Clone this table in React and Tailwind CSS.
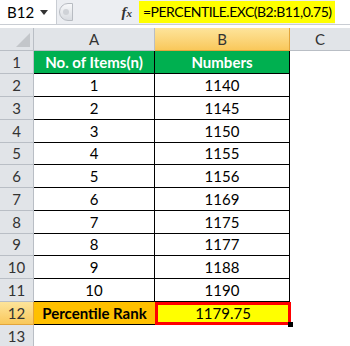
import React from "react";

const rows = [
  ["1", "1140"],
  ["2", "1145"],
  ["3", "1150"],
  ["4", "1155"],
  ["5", "1156"],
  ["6", "1169"],
  ["7", "1175"],
  ["8", "1177"],
  ["9", "1188"],
  ["10", "1190"],
];

const heights = ["h-[23px]", "h-[23px]", "h-[23px]", "h-[23px]", "h-[22px]", "h-[23px]", "h-[23px]", "h-[23px]", "h-[22px]", "h-[23px]", "h-[23px]"];

export default function App() {
  return (
    <div className="w-[350px] h-[346px] overflow-hidden bg-white text-[15px] text-black" style={{ fontFamily: 'Lato, "Liberation Sans", sans-serif' }}>
      {/* formula bar */}
      <div className="flex h-[25px] items-stretch bg-[#eceef2] border-b border-[#c9cdd3]">
        <div className="w-[57px] flex items-center justify-between pl-[7px] pr-[8px] bg-white border-r border-[#c9cdd3]">
          <span className="text-[15px] leading-none">B12</span>
          <svg width="8" height="5" viewBox="0 0 8 5"><path d="M0 0h8L4 5z" fill="#333" /></svg>
        </div>
        <div className="flex items-center pl-[2px]">
          <div className="w-[14px] h-[18px] rounded-l-full border border-[#b8bcc2] bg-gradient-to-b from-[#f7f8fa] to-[#d9dce1] flex items-center justify-center">
            <div className="w-[6px] h-[6px] rounded-full bg-[#cfd2d7]" />
          </div>
        </div>
        <div className="flex-1 flex items-center justify-end pr-[7px]">
          <span className="italic font-bold text-[15px] text-[#333]" style={{ fontFamily: '"Liberation Serif", serif' }}>f<span className="text-[11px]">x</span></span>
        </div>
        <div className="w-[196px] mt-[1px] mb-[1px] bg-[#ffff00] flex items-center pl-[4px] text-[14px] tracking-[-0.5px] leading-none whitespace-nowrap overflow-hidden">
          =PERCENTILE.EXC(B2:B11,0.75)
        </div>
        <div className="w-[15px] bg-white" />
      </div>
      <div className="h-[3px] bg-white" />

      {/* column headers */}
      <div className="flex h-[23px] text-[#333]">
        <div className="w-[34px] bg-[#e1e4e8] border-r border-b border-[#b9bec5] relative">
          <svg className="absolute right-[3px] bottom-[3px]" width="14" height="14" viewBox="0 0 14 14"><path d="M14 0V14H0z" fill="#c3c6ca" /></svg>
        </div>
        <div className="w-[121px] bg-[#e1e4e8] border-r border-b border-[#b9bec5] flex items-center justify-center">A</div>
        <div className="w-[135px] bg-gradient-to-b from-[#fde49a] to-[#f9c85a] border-r border-b border-[#e2a53c] flex items-center justify-center">B</div>
        <div className="flex-1 bg-[#e1e4e8] border-b border-[#b9bec5] flex items-center justify-center">C</div>
      </div>

      {/* row 1 header */}
      <div className="flex h-[23px]">
        <div className="w-[34px] bg-[#e1e4e8] border-r border-b border-[#b9bec5] flex items-center justify-center text-[#333]">1</div>
        <div className="w-[121px] bg-[#00b050] border-r border-b border-black flex items-center justify-center text-white font-bold">No. of Items(n)</div>
        <div className="w-[135px] bg-[#00b050] border-r border-b border-black flex items-center justify-center text-white font-bold">Numbers</div>
        <div className="flex-1" />
      </div>

      {rows.map((r, i) => (
        <div key={i} className={`flex ${heights[i + 1]}`}>
          <div className="w-[34px] bg-[#e1e4e8] border-r border-b border-[#b9bec5] flex items-center justify-center text-[#333]">{i + 2}</div>
          <div className="w-[121px] border-r border-b border-black flex items-center justify-center">{r[0]}</div>
          <div className="w-[135px] border-r border-b border-black flex items-center justify-center">{r[1]}</div>
          <div className="flex-1" />
        </div>
      ))}

      {/* row 12 */}
      <div className="flex h-[23px]">
        <div className="w-[34px] bg-gradient-to-b from-[#fde49a] to-[#f9c85a] border-r border-b border-[#e2a53c] flex items-center justify-center text-[#333]">12</div>
        <div className="w-[121px] bg-[#ffc000] border-b border-black flex items-center justify-center font-bold">Percentile Rank</div>
        <div className="w-[136px] bg-[#ffff00] border-[3px] border-[#ff0000] flex items-center justify-center relative">
          1179.75
          <div className="absolute right-[-5px] bottom-[-5px] w-[5px] h-[5px] bg-black" />
        </div>
        <div className="flex-1" />
      </div>

      {/* row 13 */}
      <div className="flex h-[23px]">
        <div className="w-[34px] bg-[#e1e4e8] border-r border-b border-[#b9bec5] flex items-center justify-center text-[#333]">13</div>
        <div className="flex-1" />
      </div>
    </div>
  );
}
